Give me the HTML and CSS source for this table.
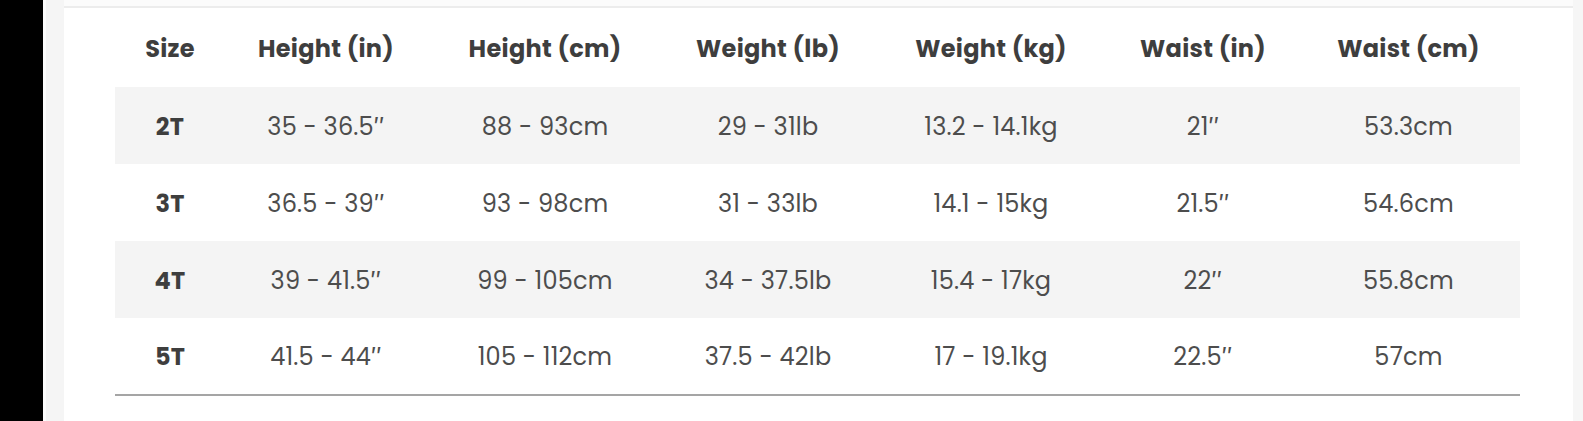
FILE: index.html
```html
<!DOCTYPE html>
<html lang="en">
<head>
<meta charset="utf-8">
<title>Size chart</title>
<link rel="stylesheet" href="styles.css">
</head>
<body>
<div class="page">
  <div class="rail"></div>
  <div class="gutter"></div>
  <div class="main">
    <div class="topstrip"></div>
    <div class="panel">
      <table class="chart">
        <colgroup>
          <col class="c1"><col class="c2"><col class="c3"><col class="c4"><col class="c5"><col class="c6"><col class="c7">
        </colgroup>
        <thead>
          <tr><th>Size</th><th>Height (in)</th><th>Height (cm)</th><th>Weight (lb)</th><th>Weight (kg)</th><th>Waist (in)</th><th>Waist (cm)</th></tr>
        </thead>
        <tbody>
          <tr class="alt"><td class="size">2T</td><td>35 - 36.5″</td><td>88 - 93cm</td><td>29 - 31lb</td><td>13.2 - 14.1kg</td><td>21″</td><td>53.3cm</td></tr>
          <tr><td class="size">3T</td><td>36.5 - 39″</td><td>93 - 98cm</td><td>31 - 33lb</td><td>14.1 - 15kg</td><td>21.5″</td><td>54.6cm</td></tr>
          <tr class="alt"><td class="size">4T</td><td>39 - 41.5″</td><td>99 - 105cm</td><td>34 - 37.5lb</td><td>15.4 - 17kg</td><td>22″</td><td>55.8cm</td></tr>
          <tr><td class="size">5T</td><td>41.5 - 44″</td><td>105 - 112cm</td><td>37.5 - 42lb</td><td>17 - 19.1kg</td><td>22.5″</td><td>57cm</td></tr>
        </tbody>
      </table>
    </div>
  </div>
  <div class="rightbar"></div>
</div>
</body>
</html>
```
FILE: styles.css
```css
html, body {
  margin: 0;
  padding: 0;
  background: #ffffff;
}
.page {
  display: flex;
  height: 421px;
  font-family: "Poppins", "Inter", "Noto Sans", sans-serif;
}
.rail {
  width: 43px;
  background: #000;
  flex: none;
}
.gutter {
  width: 18px;
  flex: none;
  border-left: 3px solid #fdfdfd;
  background: #f5f5f5;
}
.main {
  flex: 1;
  display: flex;
  flex-direction: column;
}
.topstrip {
  height: 6px;
  background: #fbfbfb;
  border-bottom: 2px solid #ececec;
}
.panel {
  flex: 1;
  background: #fff;
  padding: 0 0 0 51px;
}
.rightbar {
  width: 10px;
  flex: none;
  background: #f6f6f6;
}
.chart {
  border-collapse: collapse;
  width: 1405px;
  table-layout: fixed;
  border-bottom: 2px solid #a5a5a5;
}
.c1 { width: 110px; }
.c2 { width: 202px; }
.c3 { width: 236px; }
.c4 { width: 210px; }
.c5 { width: 236px; }
.c6 { width: 188px; }
.c7 { width: 223px; }
.chart th, .chart td {
  height: 77px;
  padding: 2px 0 0;
  text-align: center;
  vertical-align: middle;
  font-size: 24px;
  line-height: 30px;
  white-space: nowrap;
  box-sizing: border-box;
}
.chart th {
  height: 79px;
  font-weight: 700;
  color: #3e3e3e;
  letter-spacing: 0.3px;
}
.chart td {
  font-weight: 400;
  color: #4d4d4d;
  letter-spacing: 0.2px;
}
.chart td.size {
  font-weight: 700;
  color: #3e3e3e;
}
.chart tr.alt td {
  background: #f4f4f4;
}
```
